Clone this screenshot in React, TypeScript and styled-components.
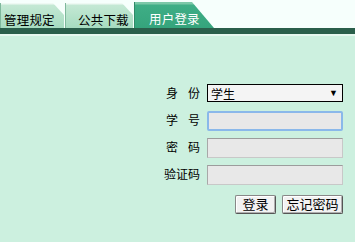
import styled, { createGlobalStyle } from "styled-components";

const GlobalStyle = createGlobalStyle`
  html, body {
    margin: 0;
    padding: 0;
    background: #ccf0df;
    font-family: "Liberation Sans", "Noto Sans CJK SC", sans-serif;
  }
`;

const Page = styled.div`
  width: 355px;
  height: 242px;
  display: flex;
  flex-direction: column;
  background: #ccf0df;
  overflow: hidden;
`;

const TabStrip = styled.div`
  height: 28px;
  display: flex;
  align-items: flex-end;
  background: #f6fffc;
`;

const Tab = styled.div<{ $active?: boolean; $width: number; $indent: number }>`
  width: ${(p) => p.$width}px;
  height: ${(p) => (p.$active ? 26 : 25)}px;
  margin-right: ${(p) => (p.$active ? 0 : 1)}px;
  box-sizing: border-box;
  padding: 11px 0 0 ${(p) => p.$indent}px;
  font-size: 12.5px;
  letter-spacing: 0.2px;
  line-height: 14px;
  color: ${(p) => (p.$active ? "#ffffff" : "#000000")};
  background: ${(p) =>
    p.$active
      ? "linear-gradient(#7cc8a8 0, #7cc8a8 2px, #3fae86 3px, #35a47c 100%)"
      : "linear-gradient(#eef9f3 0, #eef9f3 1px, #c4e8d4 2px, #a6dcc0 100%)"};
  clip-path: ${(p) =>
    p.$active
      ? "polygon(0 0, calc(100% - 22px) 0, 100% 100%, 0 100%)"
      : "polygon(0 0, calc(100% - 11px) 0, 100% 12px, 100% 100%, 0 100%)"};
  border-left: 1px solid ${(p) => (p.$active ? "#2f8a68" : "#7fb89c")};
  white-space: nowrap;
`;

const Bar = styled.div`
  height: 6px;
  background: #2a5f4b;
  border-bottom: 2px solid #e6f8ef;
`;

const Body = styled.div`
  flex: 1;
  display: flex;
  justify-content: flex-end;
  padding: 48px 12px 0 0;
`;

const Form = styled.div`
  display: grid;
  grid-template-columns: auto 136px;
  column-gap: 7px;
  row-gap: 7px;
  align-items: center;
  align-content: start;
`;

const Label = styled.div<{ $spaced?: boolean }>`
  font-size: 12px;
  text-align: right;
  letter-spacing: ${(p) => (p.$spaced ? "10px" : "0")};
  margin-right: ${(p) => (p.$spaced ? "-10px" : "0")};
  line-height: 20px;
  color: #000;
`;

const SelectBox = styled.div`
  height: 18px;
  box-sizing: border-box;
  border: 1px solid #000;
  background: #f4f4f4;
  display: flex;
  align-items: center;
  justify-content: space-between;
  padding: 0 4px 0 3px;
  font-size: 12px;
  margin-bottom: 2px;
`;

const Arrow = styled.span`
  font-size: 9px;
`;

const Field = styled.input<{ $focus?: boolean }>`
  height: 20px;
  width: 136px;
  box-sizing: border-box;
  margin: 0;
  background: #e8e8e8;
  border: ${(p) => (p.$focus ? "2px solid #8ab8ea" : "1px solid #c8c8c8")};
  border-top-color: ${(p) => (p.$focus ? "#8ab8ea" : "#9c9c9c")};
  border-left-color: ${(p) => (p.$focus ? "#8ab8ea" : "#a8a8a8")};
  border-radius: ${(p) => (p.$focus ? "2px" : "0")};
  outline: none;
`;

const Buttons = styled.div`
  grid-column: 1 / span 2;
  display: flex;
  justify-content: flex-end;
  gap: 6px;
  margin-top: 3px;
`;

const Btn = styled.button<{ $w: number }>`
  width: ${(p) => p.$w}px;
  height: 19px;
  padding: 0;
  font-family: "Liberation Sans", "Noto Sans CJK SC", sans-serif;
  font-size: 13px;
  line-height: 15px;
  background: #f2f2f2;
  border: 1px solid #555;
  border-top-color: #888;
  border-left-color: #888;
  box-shadow: inset -1px -1px 0 #b0b0b0, inset 1px 1px 0 #fff;
  border-radius: 2px;
  color: #000;
`;

export default function App() {
  return (
    <>
      <GlobalStyle />
      <Page>
        <TabStrip>
          <Tab $width={64} $indent={3}>
            管理规定
          </Tab>
          <Tab $width={68} $indent={12}>
            公共下载
          </Tab>
          <Tab $width={80} $indent={14} $active>
            用户登录
          </Tab>
        </TabStrip>
        <Bar />
        <Body>
          <Form>
            <Label $spaced>身份</Label>
            <SelectBox>
              <span>学生</span>
              <Arrow>▼</Arrow>
            </SelectBox>
            <Label $spaced>学号</Label>
            <Field $focus />
            <Label $spaced>密码</Label>
            <Field />
            <Label>验证码</Label>
            <Field />
            <Buttons>
              <Btn $w={41}>登录</Btn>
              <Btn $w={61}>忘记密码</Btn>
            </Buttons>
          </Form>
        </Body>
      </Page>
    </>
  );
}
